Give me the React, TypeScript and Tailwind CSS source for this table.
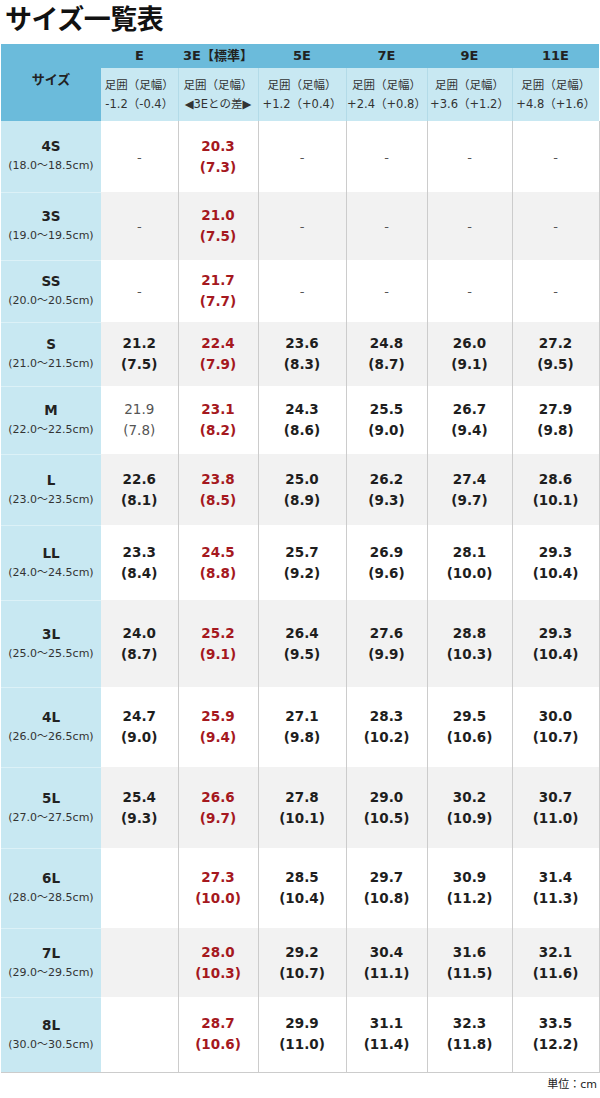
import React from 'react'

type Cell = null | '' | [string, string]

interface SizeRow {
    size: string
    range: string
    h: string
    cells: Cell[]
    muted?: boolean
}

const font = 'font-["DejaVu_Sans","Noto_Sans_CJK_JP",sans-serif]'

const columns = [
    { label: 'E', line1: '足囲（足幅）', line2: '-1.2（-0.4）' },
    { label: '3E【標準】', line1: '足囲（足幅）', line2: '◀3Eとの差▶' },
    { label: '5E', line1: '足囲（足幅）', line2: '+1.2（+0.4）' },
    { label: '7E', line1: '足囲（足幅）', line2: '+2.4（+0.8）' },
    { label: '9E', line1: '足囲（足幅）', line2: '+3.6（+1.2）' },
    { label: '11E', line1: '足囲（足幅）', line2: '+4.8（+1.6）' },
]

const rows: SizeRow[] = [
    { size: '4S', range: '(18.0～18.5cm)', h: 'h-[71px]', cells: [null, ['20.3', '7.3'], null, null, null, null] },
    { size: '3S', range: '(19.0～19.5cm)', h: 'h-[68px]', cells: [null, ['21.0', '7.5'], null, null, null, null] },
    { size: 'SS', range: '(20.0～20.5cm)', h: 'h-[62px]', cells: [null, ['21.7', '7.7'], null, null, null, null] },
    { size: 'S', range: '(21.0～21.5cm)', h: 'h-[64px]', cells: [['21.2', '7.5'], ['22.4', '7.9'], ['23.6', '8.3'], ['24.8', '8.7'], ['26.0', '9.1'], ['27.2', '9.5']] },
    { size: 'M', range: '(22.0～22.5cm)', h: 'h-[68px]', muted: true, cells: [['21.9', '7.8'], ['23.1', '8.2'], ['24.3', '8.6'], ['25.5', '9.0'], ['26.7', '9.4'], ['27.9', '9.8']] },
    { size: 'L', range: '(23.0～23.5cm)', h: 'h-[71px]', cells: [['22.6', '8.1'], ['23.8', '8.5'], ['25.0', '8.9'], ['26.2', '9.3'], ['27.4', '9.7'], ['28.6', '10.1']] },
    { size: 'LL', range: '(24.0～24.5cm)', h: 'h-[75px]', cells: [['23.3', '8.4'], ['24.5', '8.8'], ['25.7', '9.2'], ['26.9', '9.6'], ['28.1', '10.0'], ['29.3', '10.4']] },
    { size: '3L', range: '(25.0～25.5cm)', h: 'h-[87px]', cells: [['24.0', '8.7'], ['25.2', '9.1'], ['26.4', '9.5'], ['27.6', '9.9'], ['28.8', '10.3'], ['29.3', '10.4']] },
    { size: '4L', range: '(26.0～26.5cm)', h: 'h-[80px]', cells: [['24.7', '9.0'], ['25.9', '9.4'], ['27.1', '9.8'], ['28.3', '10.2'], ['29.5', '10.6'], ['30.0', '10.7']] },
    { size: '5L', range: '(27.0～27.5cm)', h: 'h-[81px]', cells: [['25.4', '9.3'], ['26.6', '9.7'], ['27.8', '10.1'], ['29.0', '10.5'], ['30.2', '10.9'], ['30.7', '11.0']] },
    { size: '6L', range: '(28.0～28.5cm)', h: 'h-[80px]', cells: ['', ['27.3', '10.0'], ['28.5', '10.4'], ['29.7', '10.8'], ['30.9', '11.2'], ['31.4', '11.3']] },
    { size: '7L', range: '(29.0～29.5cm)', h: 'h-[69px]', cells: ['', ['28.0', '10.3'], ['29.2', '10.7'], ['30.4', '11.1'], ['31.6', '11.5'], ['32.1', '11.6']] },
    { size: '8L', range: '(30.0～30.5cm)', h: 'h-[75px]', cells: ['', ['28.7', '10.6'], ['29.9', '11.0'], ['31.1', '11.4'], ['32.3', '11.8'], ['33.5', '12.2']] },
]

function ValueCell({ cell, col, muted }: { cell: Cell; col: number; muted?: boolean }) {
    if (cell === '') return null
    if (cell === null) {
        return <span className="text-[13px] text-[#555]">-</span>
    }
    let color = 'text-[#1e1e1e] font-bold'
    if (col === 1) color = 'text-[#a5181e] font-bold'
    else if (col === 0 && muted) color = 'text-[#555]'
    return (
        <div className={`flex flex-col items-center text-[13.5px] leading-[21px] ${color}`}>
            <span>{cell[0]}</span>
            <span>({cell[1]})</span>
        </div>
    )
}

export default function App() {
    return (
        <div className={`w-[600px] bg-white text-[#222] ${font}`}>
            <h1 className='h-[44px] pl-[5px] text-[27px] leading-[36px] font-bold tracking-[-0.5px] text-[#111] font-["Noto_Sans_CJK_JP",sans-serif]'>
                サイズ一覧表
            </h1>
            <table className="ml-[1px] w-[598px] table-fixed border-collapse">
                <colgroup>
                    <col className="w-[100px]" />
                    <col className="w-[77px]" />
                    <col className="w-[80px]" />
                    <col className="w-[88px]" />
                    <col className="w-[81px]" />
                    <col className="w-[85px]" />
                    <col className="w-[87px]" />
                </colgroup>
                <thead>
                    <tr className="h-[24px] bg-[#6bbbdb]">
                        <th rowSpan={2} className="p-0 text-center align-middle text-[13px] font-bold text-[#222]">
                            <span className="relative top-[-3px]">サイズ</span>
                        </th>
                        {columns.map((c) => (
                            <th key={c.label} className="p-0 text-center text-[13px] font-bold leading-[24px] text-[#222]">
                                {c.label}
                            </th>
                        ))}
                    </tr>
                    <tr className="h-[53px] bg-[#c8e8f2]">
                        {columns.map((c, i) => (
                            <td
                                key={c.label}
                                className={`p-0 text-center align-middle text-[11.5px] leading-[19px] text-[#333] ${i > 0 ? 'border-l border-[#b3dbe8]' : ''}`}
                            >
                                <div className="flex flex-col items-center">
                                    <span>{c.line1}</span>
                                    <span>{c.line2}</span>
                                </div>
                            </td>
                        ))}
                    </tr>
                </thead>
                <tbody>
                    {rows.map((r, ri) => (
                        <tr key={r.size} className={`${r.h} ${ri % 2 === 1 ? 'bg-[#f2f2f2]' : 'bg-white'} ${ri === rows.length - 1 ? 'border-b border-[#cccccc]' : ''}`}>
                            <td className={`bg-[#c8e8f2] p-0 text-center align-middle ${ri < rows.length - 1 ? 'border-b border-[#dcf1f7]' : ''}`}>
                                <div className="flex flex-col items-center leading-[20px]">
                                    <span className="text-[13.5px] font-bold text-[#222]">{r.size}</span>
                                    <span className="text-[11px] text-[#333]">{r.range}</span>
                                </div>
                            </td>
                            {r.cells.map((cell, ci) => (
                                <td
                                    key={ci}
                                    className={`p-0 text-center align-middle ${ci > 0 ? 'border-l border-[#cccccc]' : ''} ${ci === 5 ? 'border-r border-[#cccccc]' : ''}`}
                                >
                                    <ValueCell cell={cell} col={ci} muted={r.muted} />
                                </td>
                            ))}
                        </tr>
                    ))}
                </tbody>
            </table>
            <div className="flex h-[26px] items-center justify-end pr-[3px] text-[11px] text-[#222]">
                単位：cm
            </div>
        </div>
    )
}
